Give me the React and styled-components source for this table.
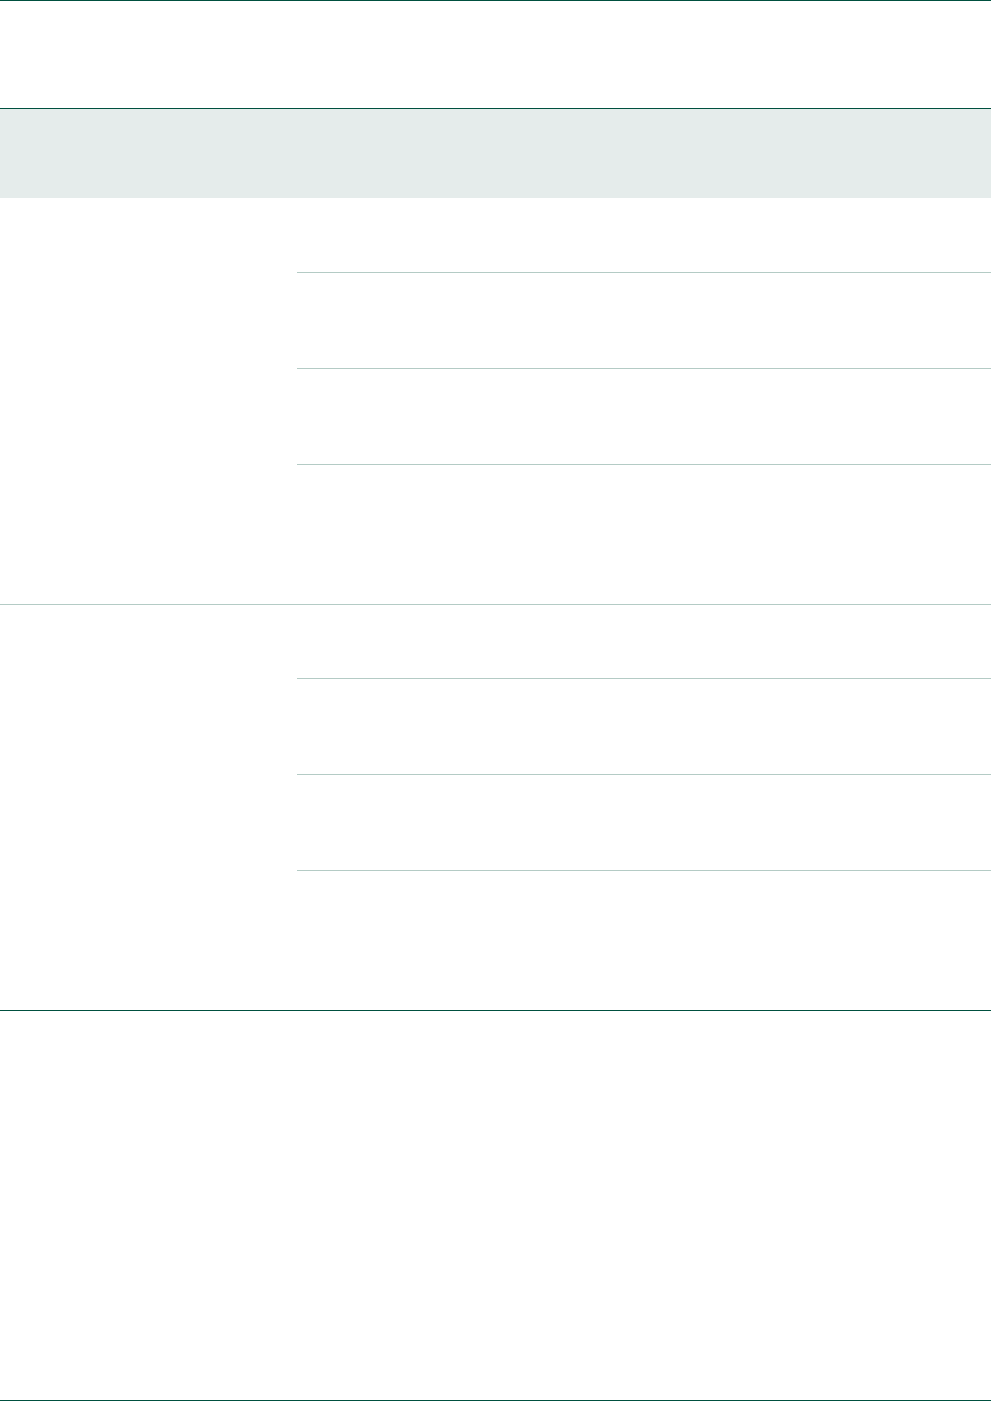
import React from "react";
import styled, { createGlobalStyle } from "styled-components";

const Global = createGlobalStyle`
  html, body { margin: 0; padding: 0; background: #ffffff; }
  body { font-family: "Liberation Sans", Arial, sans-serif; }
`;

const DARK = "#00503f";
const LIGHT = "#b4cbc5";

const Table = styled.div`
  width: 991px;
  display: flex;
  flex-direction: column;
`;

const HeaderRow = styled.div`
  height: 107px;
  border-top: 1px solid ${DARK};
  border-bottom: 1px solid ${DARK};
`;

const Band = styled.div`
  height: 89px;
  background: #e5eceb;
`;

const Group = styled.div`
  display: grid;
  grid-template-columns: 297px 1fr;
  border-bottom: 1px solid ${(p) => (p.$last ? DARK : LIGHT)};
`;

const GroupLabel = styled.div``;

const SubRows = styled.div`
  display: flex;
  flex-direction: column;
`;

const SubRow = styled.div`
  height: ${(p) => p.$h}px;
  border-bottom: ${(p) => (p.$divider ? `1px solid ${LIGHT}` : "none")};
`;

const Footer = styled.div`
  height: 389px;
  border-bottom: 1px solid ${DARK};
`;

const groups = [
  { rows: [74, 95, 95, 139] },
  { rows: [73, 95, 95, 139], last: true },
];

export default function App() {
  return (
    <>
      <Global />
      <Table>
        <HeaderRow />
        <Band />
        {groups.map((g, gi) => (
          <Group key={gi} $last={g.last}>
            <GroupLabel />
            <SubRows>
              {g.rows.map((h, ri) => (
                <SubRow key={ri} $h={h} $divider={ri < g.rows.length - 1} />
              ))}
            </SubRows>
          </Group>
        ))}
        <Footer />
      </Table>
    </>
  );
}
